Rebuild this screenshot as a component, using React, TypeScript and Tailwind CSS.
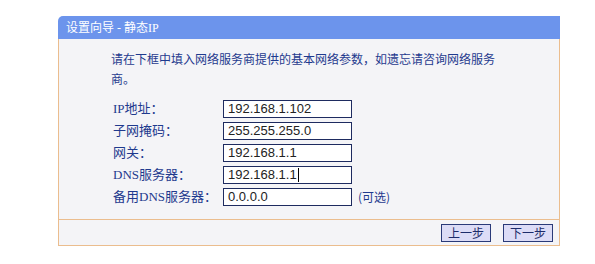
const labelFont = "font-['Liberation_Serif','Noto_Sans_CJK_SC',serif]";

type Row = { label: string; value: string; note?: string; caret?: boolean };

const rows: Row[] = [
  { label: "IP地址：", value: "192.168.1.102" },
  { label: "子网掩码：", value: "255.255.255.0" },
  { label: "网关：", value: "192.168.1.1" },
  { label: "DNS服务器：", value: "192.168.1.1", caret: true },
  { label: "备用DNS服务器：", value: "0.0.0.0", note: "(可选)" },
];

const WizardButton = ({ children }: { children: React.ReactNode }) => (
  <button className="h-[18px] w-[50px] border border-[#2a3a78] bg-[#dcdcf6] text-[12px] leading-none text-[#1c2c6a] font-['Noto_Sans_CJK_SC',sans-serif]">
    {children}
  </button>
);

export default function App() {
  return (
    <div className="h-[264px] w-[595px] bg-white pt-[16px]">
      <div className="ml-[58px] w-[502px]">
        {/* Title bar */}
        <div className="flex h-[23px] items-center rounded-tl-[5px] bg-[#6c94ec] pl-[8px] text-[12px] text-white">
          <span className={labelFont}>设置向导 - 静态IP</span>
        </div>

        {/* Body */}
        <div className="h-[180px] border-x border-[#ebbd8e] bg-[#f4f4f7] pl-[52px] pt-[10px]">
          <p className="w-[400px] text-[12px] leading-[20px] text-[#1f3a8e] font-['Noto_Sans_CJK_SC',sans-serif]">
            请在下框中填入网络服务商提供的基本网络参数，如遗忘请咨询网络服务商。
          </p>

          <div className="mt-[11px] flex flex-col gap-[4px] pl-[2px]">
            {rows.map((r) => (
              <div key={r.label} className="flex h-[18px] items-center">
                <span className={`w-[110px] text-[13px] text-[#1f3a8e] ${labelFont}`}>{r.label}</span>
                <div className="flex h-[18px] w-[129px] items-center border border-[#1e2b60] bg-white pl-[4px] text-[13px] text-[#222] font-['Liberation_Sans',sans-serif]">
                  {r.value}
                  {r.caret && <span className="ml-[1px] h-[14px] w-px bg-black" />}
                </div>
                {r.note && (
                  <span className="ml-[6px] text-[12px] text-[#1f3a8e] font-['Noto_Sans_CJK_SC',sans-serif]">
                    {r.note}
                  </span>
                )}
              </div>
            ))}
          </div>
        </div>

        {/* Footer */}
        <div className="flex h-[27px] items-center justify-end gap-[12px] border border-[#ebbd8e] bg-[#f4f4f7] pr-[6px]">
          <WizardButton>上一步</WizardButton>
          <WizardButton>下一步</WizardButton>
        </div>
      </div>
    </div>
  );
}
